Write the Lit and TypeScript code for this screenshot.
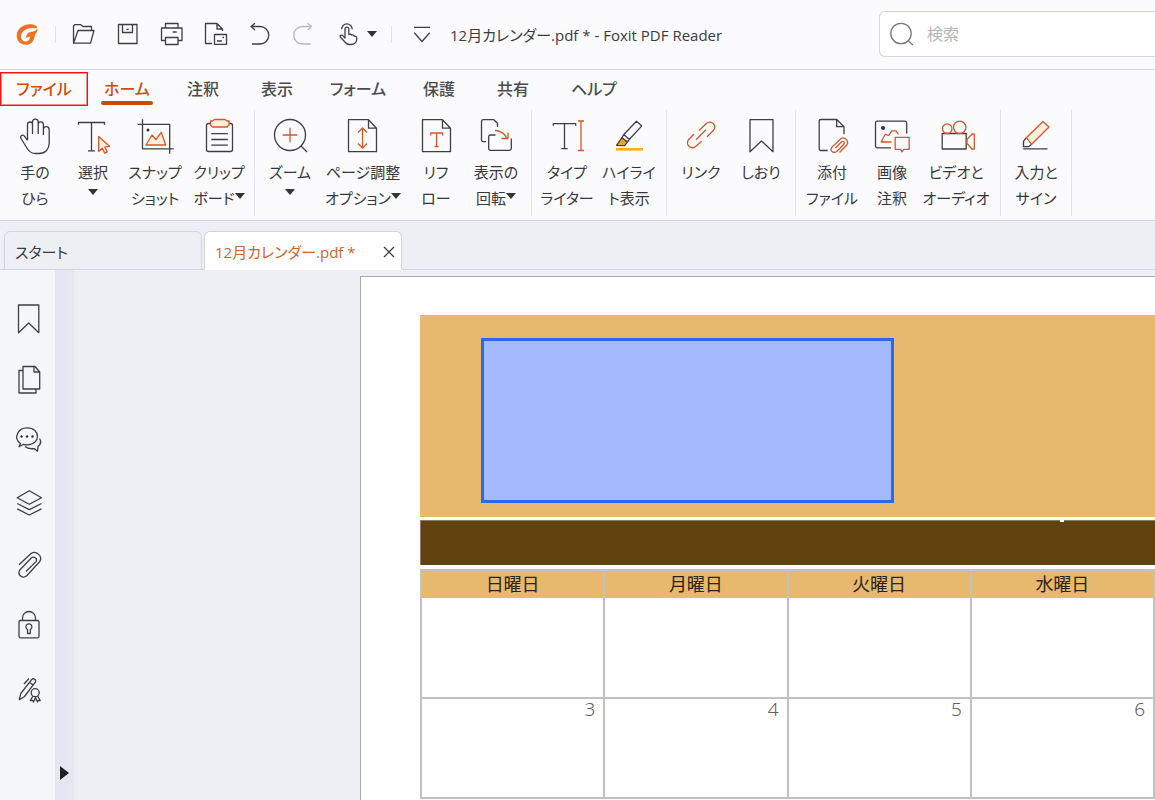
import { LitElement, html, svg, css, nothing, type SVGTemplateResult } from "lit";
import { customElement } from "lit/decorators.js";

type Art = SVGTemplateResult;

interface Tool {
  label: string[];
  icon: Art;
  size?: string;
  caret?: boolean;
}

/* ---------- quick access icons, 28 x 28 ---------- */
const logo = svg`
  <path class="brand" d="M23.500 6C17 1.800 3.700 5.500 3.700 15.800c0 5.200 3.800 9 8.900 9 5.500 0 9.200-4.500 9.200-10.400 2-1.300 3-3.800 2.500-5.400z"/>
  <path class="paper" d="M24.500 8.600C14.500 6.500 8 11 8 16.600c0 3.200 2.200 5.200 5 5.200 3.400 0 5.600-2.600 5.400-6.200z"/>
  <path class="brand" d="M24 9.500c-2 2-4 1.900-6.500 2.600-2.600.8-4.500 2.700-4.500 5.700l4.200-1.200c-.3 3-1.700 4.600-4 5.200 4 1.300 8-2.200 8.500-7.600 1.500-1.200 2.300-2.700 2.300-4.700z"/>`;
const folder = svg`<path d="M4.500 23V6l1.300-1.300h6L14 6.500h8.500v4M4.500 23.200 9 10.500h16L21.500 23.200z"/>`;
const save = svg`<path d="M5.500 4.500h18.500v19h-18.500zM9.500 4.500v8h10v-8M13.500 9.300h2.200"/>`;
const printer = svg`<path d="M8.500 8V3.500h12.500V8M8.500 20.500h-4V8h20.500v12.500h-4M8.500 17.500h12.500v7h-12.500zM15.700 12h4"/>`;
const pageMail = svg`<path d="M11 23.500H4.500v-20h11.500l5.500 5.500v2M16 3.500V9h5.500M13.500 14.500h12v9.800h-12zM16 21h5M21.500 17.500h1.500"/>`;
const undo = svg`<path d="M6 6.500h9a8.700 8.700 0 0 1 0 17.500H7M10 3.200 6 6.500l4 3.500"/>`;
const redo = svg`<path class="faint" d="M22.500 6.500h-9a8.700 8.700 0 0 0 0 17.500h8M18.500 3.200l4 3.300-4 3.500"/>`;
const touch = svg`<path d="M11 18V9a1.900 1.900 0 0 1 3.800 0v5.500c1.200-.8 2.500-.3 2.800.7 1.200-.6 2.400 0 2.700 1 1.500-.4 2.500.5 2.500 2 0 3.700-1.800 6.300-6 6.300h-1.300c-2.700 0-4.200-1.500-5.300-3.300L6.300 17c-.6-1.400 1-2.400 2.200-1.600zM7.600 9.200a5.300 5.300 0 0 1 10.600 0"/>`;
const customize = svg`<path d="M6 7.300h16M6.300 12.700 14 21.500l7.700-8.800"/>`;

/* ---------- ribbon icons, 40 x 40 ---------- */
const hand = svg`<path d="M12.500 24V8.500a2.400 2.400 0 0 1 5 0V18M17.500 9V6a2.800 2.800 0 0 1 5.700 0v12M23.200 8.500a2.600 2.600 0 0 1 5.200 0V19M28.400 13.500a2.900 2.900 0 0 1 5.800 0V27c0 6-3.700 10.500-10.200 10.500h-3.500c-3.500 0-6-1.500-8-4.500L6 22.500c-1.400-2.800 1.600-4.600 3.600-2.200l2.900 4"/>`;
const select = svg`<path d="M5.500 8.800V6.500h26v2.300M18.500 6.500v28.300M15 34.800h7"/><path class="warm" d="M25.700 20.500v15l3.600-3.200 2.400 4.800 2.500-1.300-2.300-4.600 4.800-.8z"/>`;
const snapshot = svg`<path d="M2.700 8.300h32v29.500M7.500 3.300v29.500h31.200"/><circle class="dot" cx="13" cy="14" r="1.500"/><path class="warm" d="M11 29l6-10 4 4.500 5.300-7.200L30.700 29z"/>`;
const clipboard = svg`<rect x="7.500" y="7.500" width="26" height="28" rx="2"/><path d="M12.300 17.700h16.500M12.300 23.500h16.500M12.300 29.200h16.500"/><path class="warm" d="M13.500 5l2-1.500h10.500l2 1.500h2v4l-2 2H13.500l-2-2V5z"/>`;
const zoomIn = svg`<circle cx="20" cy="19" r="15.500"/><path d="M31 30l6 6"/><path class="accent" d="M12.700 19h14.600M20 11.700v14.600"/>`;
const sheet = (x: number) => svg`<path d="M${x} 3.700h20l8 8.500v23.500h-28zM${x + 20} 3.700v8.500h8"/>`;
const pageFit = svg`${sheet(5.5)}<path class="accent" d="M19.500 12v20M15 16.500l4.500-4.500 4.500 4.500M15 27.500l4.500 4.500 4.500-4.500"/>`;
const reflow = svg`${sheet(6.5)}<path class="accent" d="M14.700 19.500V17h11.800v2.500M20.600 17v13.500M18.500 30.500h4.200"/>`;
const rotate = svg`<path d="M10 25.700H7.300a1.800 1.800 0 0 1-1.800-1.800V5.500a1.800 1.800 0 0 1 1.800-1.800h10.500l3.700 3.500V11M19.500 19h-5a1.800 1.800 0 0 0-1.800 1.800v11.700a1.800 1.800 0 0 0 1.800 1.800h19a1.800 1.800 0 0 0 1.800-1.800V22.500"/><path class="accent" d="M19 14.500c5 0 9 2.500 12 7.500M32 16.500v6h-6.500"/>`;
const typewriter = svg`<path d="M6.300 9.800V7.700h22.400v2.100M17.500 7.700v25M14.300 32.700h6.400"/><path class="accent" d="M34 5v29.500M31 5h6M31 34.500h6"/>`;
const highlight = svg`<path d="M14.800 18.500 27.500 5.200l5.300 4.700L20.200 23.500zM14.800 18.500l-2 3.300 5.500 4.300 1.900-2.600"/><path class="amber" d="M12.800 21.800 7.500 29.300l8 .3 2.800-3.500z"/><path class="marker" d="M7 33.300h27"/>`;
const link = svg`<path class="accent" d="M18 14.700l7.300-7.200a4.900 4.900 0 0 1 7 7L26 20.700M12.800 18.300l-4.900 5a4.900 4.900 0 0 0 7 7l5.800-5M15 23.700l10-10"/>`;
const bookmark = svg`<path d="M9 3.700h23v32L20.500 25 9 35.700z"/>`;
const attach = svg`<path d="M15.700 34.500h-7a1.500 1.500 0 0 1-1.500-1.500V5a1.500 1.500 0 0 1 1.500-1.500h16l7.300 7.200v7.600M24.700 3.500v7.200H32"/><path class="accent" d="M27.500 36.500l7.200-7.300c2.800-3.300-1.800-9.300-6-6.500l-8.500 8.200c-3.500 4 1.500 7 4.400 4.600l7.300-7.300c1.500-2.200-1-3.500-2.500-2.200l-6 6"/>`;
const imageNote = svg`<path d="M19 31.800H5.300a1.800 1.800 0 0 1-1.800-1.800V7a1.800 1.800 0 0 1 1.800-1.800h27.600A1.800 1.800 0 0 1 34.700 7v10.500"/><circle class="dot" cx="11" cy="12" r="2"/><path class="accent" d="M19.500 26H9.200l4-7.700 3.500 1 3.300-4.500h4l2.500 3.500M23.200 21.300h14v12h-5.500l-2 2.500-1-2.500h-5.500z"/>`;
const video = svg`<rect x="6.200" y="17.500" width="24" height="15.500"/><path class="accent" d="M31 23.500l5-5.500h2.300v15H36l-5-5.500z"/><circle class="accent" cx="11.200" cy="12.700" r="4.800"/><circle class="accent" cx="23.700" cy="11.300" r="6.200"/>`;
const sign = svg`<path d="M10.300 21.700l-2.800 3.600v5.400h5l3.200-2.400M7.300 32.800h24.200"/><path class="warm" d="M27 5.500l6 5.500-17.300 17.300-5.400-6.600z"/>`;

/* ---------- side panel icons, 32 x 32 ---------- */
const sideBookmark = svg`<path d="M5.500 4h20.300v27.700L15.700 22 5.500 31.700z"/>`;
const sidePages = svg`<path d="M10 7.500H6V30h17v-4M10 3.500h12l4.700 5.500v17H10zM21 3.500V9h5.700"/>`;
const sideComments = svg`<path d="M7.500 18.600c-7.300-5-3-15.800 6.500-15.800 14 0 14 17 0 17-1.500 0-2.500-.2-3.500-.5l-4.500 2.500zM26.500 13.500c2 3 1 6-1.500 8l-.5 4.700-3.300-2.600c-4 .5-7 0-9.200-2"/><circle class="dot" cx="8.500" cy="11.500" r="1.200"/><circle class="dot" cx="14" cy="11.500" r="1.200"/><circle class="dot" cx="19.500" cy="11.500" r="1.200"/>`;
const sideLayers = svg`<path d="M16.300 3.700 28.500 10.700l-12.200 6.600L4.200 10.700zM4.200 16.500l12.100 6.200 12.200-6.200M4.200 21.800 16.300 28l12.200-6.200"/>`;
const sideClip = svg`<path d="M6 15.700 18 4.500c5-3.500 12 2.500 8.800 8L14 26.500c-4.500 4-10-.8-7.200-5.500L18.500 8.800c3-2 6.300 1 4.500 3.800L13 22.500"/>`;
const sideLock = svg`<rect x="6" y="9.500" width="20" height="17.300" rx="1.500"/><path d="M9.500 9.500V7a6.500 6.500 0 0 1 13 0v2.500M14.500 18.500a3 3 0 1 1 2.800 0V22.500h-2.800z"/>`;
const sidePen = svg`<path d="M6.300 26.700 7.800 20.500 18.600 6.600c2-2 5 .2 3.700 2.500L11.500 23.500zM16.500 9.300l3.800 3M11 11l5-5.500M20 23l-2.700 4.500h2.700l.5 1.500 2-4.500 2 4.500.5-1.500h2.300L24.500 23"/><circle cx="22.200" cy="19.700" r="4"/>`;

const quickTools: Array<[string, Art]> = [
  ["開く", folder],
  ["保存", save],
  ["印刷", printer],
  ["メール", pageMail],
  ["元に戻す", undo],
  ["やり直し", redo],
];

const menus: Array<[string, string]> = [
  ["ファイル", "wide file"],
  ["ホーム", "mid current"],
  ["注釈", ""],
  ["表示", ""],
  ["フォーム", "wide"],
  ["保護", ""],
  ["共有", ""],
  ["ヘルプ", "wide"],
];

const ribbon: Array<{ pad: string; tools: Tool[] }> = [
  {
    pad: "normal",
    tools: [
      { label: ["手の", "ひら"], icon: hand },
      { label: ["選択", ""], icon: select, caret: true, size: "slim" },
      { label: ["スナップ", "ショット"], icon: snapshot, size: "broad" },
      { label: ["クリップ", "ボード"], icon: clipboard, caret: true },
    ],
  },
  {
    pad: "normal",
    tools: [
      { label: ["ズーム", ""], icon: zoomIn, caret: true },
      { label: ["ページ調整", "オプション"], icon: pageFit, caret: true, size: "huge" },
      { label: ["リフ", "ロー"], icon: reflow },
      { label: ["表示の", "回転"], icon: rotate, caret: true },
    ],
  },
  {
    pad: "normal",
    tools: [
      { label: ["タイプ", "ライター"], icon: typewriter },
      { label: ["ハイライ", "ト表示"], icon: highlight, size: "medium" },
    ],
  },
  {
    pad: "tight",
    tools: [
      { label: ["リンク"], icon: link },
      { label: ["しおり"], icon: bookmark },
    ],
  },
  {
    pad: "loose",
    tools: [
      { label: ["添付", "ファイル"], icon: attach },
      { label: ["画像", "注釈"], icon: imageNote },
      { label: ["ビデオと", "オーディオ"], icon: video, size: "broad" },
    ],
  },
  { pad: "normal", tools: [{ label: ["入力と", "サイン"], icon: sign }] },
];

const panels: Array<[string, Art]> = [
  ["しおり", sideBookmark],
  ["ページ", sidePages],
  ["コメント", sideComments],
  ["レイヤー", sideLayers],
  ["添付ファイル", sideClip],
  ["セキュリティ", sideLock],
  ["電子署名", sidePen],
];

const icon = (size: number, art: Art) => html`<svg
  class="icon"
  width=${size}
  height=${size}
  viewBox="0 0 ${size} ${size}"
  aria-hidden="true"
>${art}</svg>`;

const caret = html`<svg class="caret" width="10" height="6" viewBox="0 0 10 6" aria-hidden="true"><path d="M0 0h10L5 6z"/></svg>`;

const shared = css`
  :host,
  * {
    box-sizing: border-box;
  }
  button {
    font: inherit;
    color: inherit;
    background: none;
    border: 0;
    padding: 0;
    margin: 0;
    cursor: pointer;
  }
  .icon {
    display: block;
    flex: none;
    overflow: visible;
    fill: none;
    stroke: #3f3f42;
    stroke-width: 1.3;
    stroke-linejoin: round;
  }
  .icon .accent {
    stroke: #d4572b;
  }
  .icon .warm {
    stroke: #d4572b;
    fill: #fdeedd;
  }
  .icon .amber {
    fill: #f7a51c;
  }
  .icon .marker {
    stroke: #fbb016;
    stroke-width: 2.6;
  }
  .icon .faint {
    stroke: #b9b9bd;
  }
  .icon .dot {
    fill: #2d2d30;
    stroke: none;
  }
  .icon .brand {
    fill: #f37021;
    stroke: none;
  }
  .icon .paper {
    fill: #fbfbfe;
    stroke: none;
  }
  .caret {
    fill: #333;
    flex: none;
  }
`;

@customElement("title-bar")
class TitleBar extends LitElement {
  static styles = [
    shared,
    css`
      :host {
        display: flex;
        align-items: center;
        height: 70px;
        padding: 0 0 1px 5px;
        border-bottom: 1px solid #d5d7e2;
        background: #fbfbfe;
      }
      .quick {
        display: flex;
        align-items: center;
        justify-content: center;
        width: 44px;
        height: 44px;
      }
      .touch {
        width: 60px;
        gap: 5px;
      }
      .more {
        width: 50px;
      }
      .rule {
        width: 1px;
        height: 17px;
        margin: 0 5px 0 6px;
        background: #dfe0e8;
      }
      .title {
        margin: 0;
        padding: 2px 0 0 3px;
        font-size: 15px;
        font-weight: 400;
        line-height: 24px;
        white-space: nowrap;
        color: #3a3a3c;
      }
      .search {
        display: flex;
        align-items: center;
        gap: 12px;
        flex: 0 0 24%;
        height: 46px;
        margin-left: auto;
        padding-left: 9px;
        border: 1px solid #d3d5e2;
        border-right: 0;
        border-radius: 6px 0 0 6px;
        background: #fff;
      }
      .search .icon {
        stroke: #77777b;
      }
      .field {
        flex: 1;
        min-width: 0;
        border: 0;
        outline: 0;
        padding: 0;
        background: none;
        font: inherit;
        font-size: 16px;
        color: #333;
      }
      .field::placeholder {
        color: #b5b5b8;
        opacity: 1;
      }
    `,
  ];

  render() {
    return html`
      <button class="quick" aria-label="Foxit">${icon(28, logo)}</button>
      <span class="rule"></span>
      ${quickTools.map(([name, art]) => html`<button class="quick" aria-label=${name}>${icon(28, art)}</button>`)}
      <button class="quick touch" aria-label="タッチモード">${icon(28, touch)}${caret}</button>
      <span class="rule"></span>
      <button class="quick more" aria-label="カスタマイズ">${icon(28, customize)}</button>
      <h1 class="title">12月カレンダー.pdf * - Foxit PDF Reader</h1>
      <label class="search">
        ${icon(26, svg`<circle cx="12" cy="12.500" r="10.200"/><path d="M19.500 20l4.500 4"/>`)}
        <input class="field" type="search" placeholder="検索" aria-label="検索" />
      </label>
    `;
  }
}

@customElement("menu-tabs")
class MenuTabs extends LitElement {
  static styles = [
    shared,
    css`
      :host {
        display: flex;
        height: 36px;
        padding-top: 2px;
        background: #fbfbfe;
      }
      .menu {
        display: flex;
        align-items: center;
        justify-content: center;
        position: relative;
        width: 74px;
        height: 34px;
        padding-bottom: 2px;
        font-size: 16px;
        font-weight: 500;
        white-space: nowrap;
        color: #4b4b4d;
      }
      .mid {
        width: 78px;
      }
      .wide {
        width: 88px;
      }
      .file,
      .current {
        color: #cf4a0c;
      }
      .file {
        border: 1px solid #f31313;
        outline: 1px solid #fb8a8a;
        outline-offset: -2px;
      }
      .current::after {
        content: "";
        position: absolute;
        left: 13px;
        right: 13px;
        bottom: 1px;
        height: 4px;
        border-radius: 2px;
        background: #cb4a0a;
      }
    `,
  ];

  render() {
    return menus.map(([name, kind]) => html`<button class="menu ${kind}">${name}</button>`);
  }
}

@customElement("tool-ribbon")
class ToolRibbon extends LitElement {
  static styles = [
    shared,
    css`
      :host {
        display: flex;
        padding: 4px 0;
        border-bottom: 1px solid #d0d3e0;
        background: #fbfbfe;
      }
      .group {
        display: flex;
        padding: 0 5px;
        border-right: 1px solid #e4e5ec;
      }
      .tight {
        padding: 0 4px;
      }
      .loose {
        padding: 0 10px 0 6px;
      }
      .tool {
        display: flex;
        flex-direction: column;
        align-items: center;
        width: 60px;
        height: 106px;
        padding-top: 6px;
        font-size: 15px;
        line-height: 26px;
        white-space: nowrap;
        color: #37373a;
      }
      .slim {
        width: 56px;
      }
      .medium {
        width: 64px;
      }
      .broad {
        width: 68px;
      }
      .huge {
        width: 86px;
      }
      .tool .icon {
        margin-bottom: 3px;
      }
      .line {
        display: flex;
        align-items: flex-start;
        height: 26px;
      }
      .line .caret {
        margin-top: 8px;
      }
      .alone .caret {
        margin-top: 4px;
      }
    `,
  ];

  private tool({ label, icon: art, size, caret: hasCaret }: Tool) {
    const last = label.length - 1;
    return html`<button class="tool ${size ?? ""}">
      ${icon(40, art)}
      ${label.map(
        (text, i) => html`<span class="line ${text ? "" : "alone"}">${text}${hasCaret && i === last ? caret : nothing}</span>`
      )}
    </button>`;
  }

  render() {
    return ribbon.map(({ pad, tools }) => html`<div class="group ${pad}">${tools.map((t) => this.tool(t))}</div>`);
  }
}

@customElement("document-tabs")
class DocumentTabs extends LitElement {
  static styles = [
    shared,
    css`
      :host {
        display: flex;
        align-items: flex-end;
        gap: 2px;
        height: 49px;
        padding-left: 4px;
        background: #eeeff4;
        box-shadow: inset 0 -1px #d0d3e0;
      }
      .tab {
        display: flex;
        align-items: center;
        width: 198px;
        height: 39px;
        padding: 2px 6px 0 10px;
        border: 1px solid #d0d3e0;
        border-radius: 6px 6px 0 0;
        font-size: 15px;
        color: #3a3a3c;
      }
      .open {
        border-bottom-color: #fff;
        background: #fff;
        color: #d4602f;
      }
      .name {
        flex: 1;
        text-align: left;
        white-space: nowrap;
      }
    `,
  ];

  render() {
    return html`
      <div class="tab"><button class="name">スタート</button></div>
      <div class="tab open">
        <button class="name">12月カレンダー.pdf *</button>
        <button aria-label="閉じる">${icon(12, svg`<path d="M1 1l10 10M11 1 1 11"/>`)}</button>
      </div>
    `;
  }
}

@customElement("side-panel")
class SidePanel extends LitElement {
  static styles = [
    shared,
    css`
      :host {
        display: flex;
        flex: none;
      }
      .panels {
        display: flex;
        flex-direction: column;
        width: 55px;
        padding-top: 16px;
        background: #f5f6fa;
      }
      .panel {
        display: flex;
        align-items: center;
        height: 62px;
        padding-left: 13px;
      }
      .rail {
        display: flex;
        align-items: flex-end;
        justify-content: flex-end;
        width: 19px;
        padding-bottom: 20px;
        border-right: 4px solid #e6e8ee;
        background: #e4e7f1;
      }
      .arrow {
        display: block;
        fill: #222;
      }
    `,
  ];

  render() {
    return html`
      <nav class="panels">
        ${panels.map(([name, art]) => html`<button class="panel" aria-label=${name}>${icon(32, art)}</button>`)}
      </nav>
      <div class="rail">
        <button aria-label="パネルを展開">
          <svg class="arrow" width="10" height="14" viewBox="0 0 10 14"><path d="M0 0l9 7-9 7z" /></svg>
        </button>
      </div>
    `;
  }
}

@customElement("calendar-page")
class CalendarPage extends LitElement {
  static styles = [
    shared,
    css`
      :host {
        display: block;
        flex: 1;
        min-width: 0;
        padding: 38px 0 0 59px;
        border: solid #a9aaae;
        border-width: 1px 0 0 1px;
        background: #fff;
      }
      .banner {
        height: 202px;
        padding: 23px 0 0 61px;
        background: #e7b96e;
      }
      .selection {
        width: 61%;
        min-width: 413px;
        height: 165px;
        border: 3px solid #2f65f3;
        background: #a4b9ff;
      }
      .band {
        position: relative;
        height: 45px;
        margin: 3px 0 4px;
        border: solid #8a7a66;
        border-width: 1px 0 0 1px;
        background: #624310;
      }
      .band::after {
        content: "";
        position: absolute;
        top: -1px;
        left: 87%;
        width: 4px;
        height: 2px;
        background: #fff;
      }
      .calendar {
        width: 100%;
        border-collapse: collapse;
        table-layout: fixed;
      }
      .day,
      .date {
        border: 2px solid #c1c1c1;
        padding: 0 8px;
      }
      .day {
        height: 28px;
        padding: 0 0 2px;
        border-bottom: 0;
        background: #e7b96e;
        font-size: 18px;
        font-weight: 400;
        line-height: 24px;
        color: #2a241b;
      }
      .date {
        height: 100px;
        vertical-align: top;
        text-align: right;
        line-height: 20px;
        font-family: "Noto Sans", "Noto Sans CJK JP", sans-serif;
        font-size: 19px;
        font-weight: 300;
        color: #5e5e5e;
      }
      .first .date {
        border-top: 0;
      }
    `,
  ];

  render() {
    const days = ["日曜日", "月曜日", "火曜日", "水曜日"];
    return html`
      <div class="banner"><div class="selection"></div></div>
      <div class="band"></div>
      <table class="calendar">
        <thead>
          <tr>${days.map((d) => html`<th class="day" scope="col">${d}</th>`)}</tr>
        </thead>
        <tbody>
          <tr class="first">${days.map(() => html`<td class="date"></td>`)}</tr>
          <tr>${[3, 4, 5, 6].map((n) => html`<td class="date">${n}</td>`)}</tr>
        </tbody>
      </table>
    `;
  }
}

@customElement("app-root")
class AppRoot extends LitElement {
  static styles = css`
    :host {
      display: flex;
      flex-direction: column;
      height: 100vh;
      overflow: hidden;
      background: #eeeff4;
      font-family: "Open Sans", "Noto Sans CJK JP", sans-serif;
      font-feature-settings: "palt";
    }
    .work {
      display: flex;
      flex: 1;
      min-height: 0;
    }
    .canvas {
      display: flex;
      flex: 1;
      min-width: 0;
      padding: 6px 0 0 286px;
    }
  `;

  render() {
    return html`
      <title-bar></title-bar>
      <menu-tabs></menu-tabs>
      <tool-ribbon></tool-ribbon>
      <document-tabs></document-tabs>
      <main class="work">
        <side-panel></side-panel>
        <div class="canvas"><calendar-page></calendar-page></div>
      </main>
    `;
  }
}
